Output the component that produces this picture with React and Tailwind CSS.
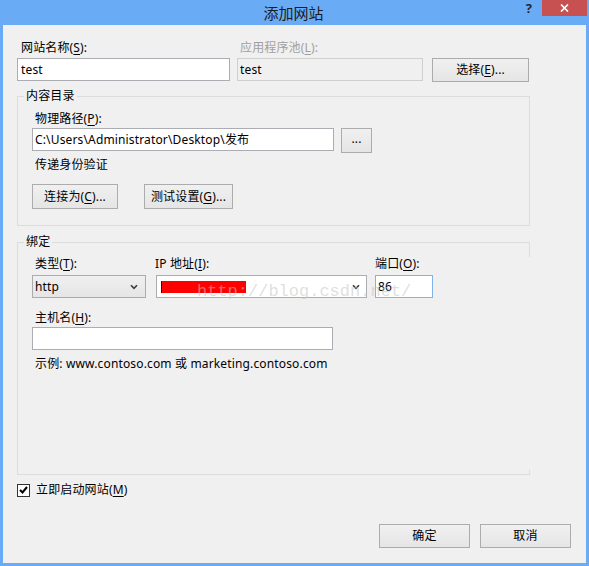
import React from "react";

const btn =
  "flex items-center justify-center border border-[#acacac] bg-[linear-gradient(#f0f0f0,#e5e5e5)] text-black";

const Chevron = () => (
  <svg width="8" height="6" viewBox="0 0 8 6" className="shrink-0">
    <path d="M1 1.2 L4 4.4 L7 1.2" fill="none" stroke="#3c3c3c" strokeWidth="1.6" />
  </svg>
);

const Key = ({ children }) => <u className="underline-offset-[2px]">{children}</u>;

const App = () => {
  return (
    <div className="relative w-[589px] h-[566px] bg-[#6aabf5] flex flex-col font-['Noto_Sans','Noto_Sans_CJK_SC',sans-serif] text-[12px] leading-[16px] tracking-[0.15px] text-black">
      {/* title bar */}
      <div className="h-[25px] flex items-start">
        <div className="flex-1" />
        <div className="h-[25px] flex items-center text-[15px] tracking-normal text-[#1b1b1b] font-['Noto_Sans_CJK_SC',sans-serif]">添加网站</div>
        <div className="flex-1 flex justify-end items-start pr-[2px]">
          <span className="mt-[1px] text-[13px] font-bold text-[#2a2a2a] leading-[14px]">?</span>
          <div className="ml-[10px] w-[45px] h-[16px] bg-[#c75050] flex items-center justify-center">
            <svg width="9" height="8" viewBox="0 0 9 8">
              <path d="M1 0.5 L8 7.5 M8 0.5 L1 7.5" stroke="#fff" strokeWidth="1.7" />
            </svg>
          </div>
        </div>
      </div>

      {/* body */}
      <div className="flex-1 mx-[3px] mb-[3px] bg-[#f0f0f0] flex flex-col pl-[14px] pr-[15px] pt-[15px] pb-[15px]">
        <div className="flex items-start">
          <div className="w-[213px] flex flex-col">
            <div className="pl-[4px] h-[16px]">网站名称(<Key>S</Key>):</div>
            <div className="mt-[2px] h-[23px] border border-[#abadb3] bg-white flex items-center pl-[3px]">test</div>
          </div>
          <div className="ml-[7px] w-[186px] flex flex-col">
            <div className="pl-[3px] h-[16px] text-[#a0a0a0]">应用程序池(<Key>L</Key>):</div>
            <div className="mt-[2px] h-[23px] border border-[#cfcfcf] bg-[#f0f0f0] flex items-center pl-[2px]">test</div>
          </div>
          <div className={`${btn} ml-[9px] mt-[18px] w-[97px] h-[24px]`}>选择(<Key>E</Key>)...</div>
        </div>

        {/* 内容目录 */}
        <div className="mt-[14px] w-[513px] border border-[#dcdcdc] flex flex-col pb-[16px]">
          <div className="-mt-[9px] ml-[6px] w-fit px-[2px] h-[16px] bg-[#f0f0f0]">内容目录</div>
          <div className="pl-[14px] flex flex-col">
            <div className="mt-[7px] pl-[3px]">物理路径(<Key>P</Key>):</div>
            <div className="mt-[1px] flex items-start">
              <div className="w-[302px] h-[23px] border border-[#abadb3] bg-white flex items-center pl-[2px]">
                C:\Users\Administrator\Desktop\发布
              </div>
              <div className={`${btn} ml-[7px] w-[31px] h-[25px] pb-[3px]`}>...</div>
            </div>
            <div className="mt-[4px] pl-[3px]">传递身份验证</div>
            <div className="mt-[11px] flex">
              <div className={`${btn} w-[86px] h-[25px]`}>连接为(<Key>C</Key>)...</div>
              <div className={`${btn} ml-[26px] w-[89px] h-[25px]`}>测试设置(<Key>G</Key>)...</div>
            </div>
          </div>
        </div>

        {/* 绑定 */}
        <div className="mt-[16px] w-[513px] flex">
          <div className="flex-1 border-l border-t border-b border-[#dcdcdc] flex flex-col pb-[102px]">
            <div className="-mt-[9px] ml-[6px] w-fit px-[2px] h-[16px] bg-[#f0f0f0]">绑定</div>
            <div className="pl-[14px] flex flex-col">
              <div className="mt-[6px] flex items-start">
                <div className="w-[114px] flex flex-col">
                  <div className="pl-[3px]">类型(<Key>T</Key>):</div>
                  <div className="mt-[3px] h-[23px] border border-[#acacac] bg-[linear-gradient(#f0f0f0,#e5e5e5)] flex items-center pl-[2px] pr-[7px]">
                    <span className="flex-1">http</span>
                    <Chevron />
                  </div>
                </div>
                <div className="ml-[10px] w-[211px] flex flex-col">
                  <div className="-ml-[1px]">IP 地址(<Key>I</Key>):</div>
                  <div className="mt-[3px] h-[23px] border border-[#abadb3] bg-white flex items-center pl-[4px] pr-[6px]">
                    <span className="mt-[1px] w-[85px] h-[12px] bg-[#ff0000] border-l-[1px] border-[#1a1a1a]" />
                    <span className="flex-1" />
                    <Chevron />
                  </div>
                </div>
                <div className="ml-[8px] w-[58px] flex flex-col">
                  <div>端口(<Key>O</Key>):</div>
                  <div className="mt-[3px] h-[23px] border border-[#7eb4ea] bg-white flex items-center pl-[2px]">86</div>
                </div>
              </div>
              <div className="mt-[12px] pl-[3px]">主机名(<Key>H</Key>):</div>
              <div className="mt-[1px] w-[301px] h-[23px] border border-[#abadb3] bg-white" />
              <div className="mt-[6px] pl-[3px]">示例: www.contoso.com 或 marketing.contoso.com</div>
            </div>
          </div>
          <div className="w-px flex flex-col">
            <div className="h-[15px] bg-[#dcdcdc]" />
            <div className="flex-1" />
            <div className="h-[5px] bg-[#dcdcdc]" />
          </div>
        </div>

        <div className="mt-[7px] h-[16px] flex items-center">
          <div className="w-[13px] h-[13px] border border-[#333333] bg-white flex items-center justify-center">
            <svg width="9" height="8" viewBox="0 0 9 8">
              <path d="M1 4 L3.5 6.5 L8 1" fill="none" stroke="#000" strokeWidth="2" />
            </svg>
          </div>
          <span className="ml-[6px]">立即启动网站(<Key>M</Key>)</span>
        </div>

        <div className="flex-1" />
        <div className="flex justify-end gap-[10px]">
          <div className={`${btn} w-[91px] h-[24px] border-[#3d9bf2]`}>确定</div>
          <div className={`${btn} w-[91px] h-[24px]`}>取消</div>
        </div>
      </div>

      {/* csdn watermark */}
      <span className="absolute left-[197px] top-[282px] font-['Liberation_Mono',monospace] text-[17px] leading-[19px] tracking-normal text-[#c4c4c4]/55 pointer-events-none">
        http://blog.csdn.net/
      </span>
    </div>
  );
};

export default App;
